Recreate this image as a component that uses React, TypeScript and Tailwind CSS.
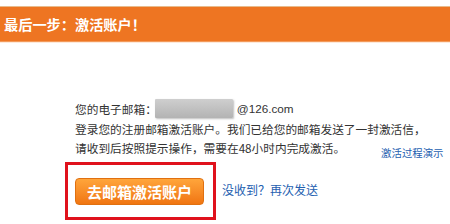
import React from "react";

export default function App() {
  return (
    <div
      className="w-[450px] h-[224px] bg-white overflow-hidden"
      style={{ fontFamily: '"Noto Sans CJK SC", "Noto Sans", sans-serif' }}
    >
      <div className="pt-[6px]">
        <div className="h-[1px] bg-[#e8bb8c]" />
        <div className="h-[34px] bg-[#ee7522] flex items-center pl-[4px]">
          <span className="text-white text-[14.2px] font-semibold leading-none">最后一步：激活账户！</span>
        </div>
        <div className="h-[1px] bg-[#f39a5a]" />
        <div className="h-[1px] bg-[#fde9da]" />
      </div>

      <div className="pl-[65px] pt-[56px] text-[#333] text-[11.7px] leading-[19px]">
        <div className="pl-[10px]">
          <div className="flex items-center h-[19px]">
            <span>您的电子邮箱：</span>
            <span className="ml-[-2px] w-[78px] h-[19px] bg-gradient-to-b from-[#cfcfcf] to-[#b3b3b3] shadow-[1px_1px_2px_rgba(0,0,0,0.25)] rounded-[1px]" />
            <span className="ml-[4px]" style={{ fontFamily: '"Liberation Sans", Arial, sans-serif' }}>@126.com</span>
          </div>
          <div className="h-[19px] mt-[1px] whitespace-nowrap">登录您的注册邮箱激活账户。我们已给您的邮箱发送了一封激活信，</div>
          <div className="flex items-start whitespace-nowrap">
            <span className="h-[19px]">请收到后按照提示操作，需要在48小时内完成激活。</span>
            <span className="ml-[36px] mt-[8px] text-[10.4px] leading-[14px] text-[#2460b0]">激活过程演示</span>
          </div>
        </div>

        <div className="flex items-center mt-[2px]">
          <div className="w-[151px] h-[58px] border-[3px] border-[#e0121c] pl-[7px] pt-[13px]">
            <div className="w-[129px] h-[27px] rounded-[4px] bg-gradient-to-b from-[#ffa53a] to-[#f07510] border border-[#e07010] flex items-center justify-center text-white text-[15px] font-semibold leading-none">
              去邮箱激活账户
            </div>
          </div>
          <span className="ml-[6px] -mt-[3px] text-[12px] text-[#2460b0]">没收到？再次发送</span>
        </div>
      </div>
    </div>
  );
}
